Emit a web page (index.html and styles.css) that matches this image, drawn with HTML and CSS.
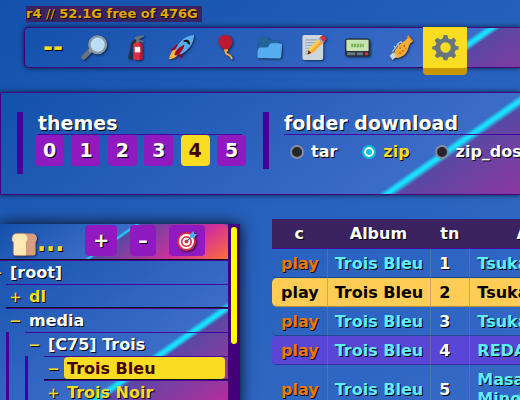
FILE: index.html
```html
<!DOCTYPE html>
<html lang="en">
<head>
<meta charset="utf-8">
<meta name="viewport" content="width=device-width, initial-scale=1">
<title>r4</title>
<link rel="stylesheet" href="styles.css">
</head>
<body>
<header class="top">
  <p class="status">r4 <span class="slashes">//</span> 52.1G free of 476G</p>
  <nav class="ops">
    <a class="op op-close" href="#">--</a>
    <a class="op" href="#search" aria-label="search">
      <svg viewBox="0 0 36 36"><path d="M4 32 15 21" stroke="#66757f" stroke-width="7" stroke-linecap="round"/><path d="m12 24 4-4" stroke="#8899a6" stroke-width="4"/><circle cx="24" cy="14" r="12" fill="#bbddf5" stroke="#8899a6" stroke-width="3.5"/></svg>
    </a>
    <a class="op" href="#unpost" aria-label="unpost">
      <svg viewBox="0 0 36 36"><path d="M18 7c-8 0-10 5-10 12L5 31c-1 4 3 5 5 3V20c0-6 2-9 8-10z" fill="#292f33"/><path d="M12 34V15c0-3 2-5 6-5s7 2 7 5v19c0 3-13 3-13 0z" fill="#dd2e44"/><path d="M21 11c3 1 4 2 4 5v18c0 1-2 2-4 2z" fill="#be1931"/><path d="M14 17h8v8h-8z" fill="#f5f8fa"/><path d="M16 6h5v5h-5zM15 3l12-3v2l-7 4 7 3-1 2-9-4-3-2z" fill="#66757f"/></svg>
    </a>
    <a class="op" href="#up" aria-label="upload">
      <svg viewBox="0 0 36 36"><path d="M7 18c4-6 9-6 12-5L10 24 2 20zM18 29c6-4 6-9 5-12L13 26l4 8z" fill="#a0041e"/><path d="M36 0C26 1 18 5 10 19l-1 5 5 4 5-1C31 19 36 10 36 0z" fill="#55acee"/><path d="M11 21c-5-1-9 3-11 14 9-1 14-5 13-11z" fill="#ffac33"/><path d="M10 25c-3 0-5 3-6 7 5-1 8-3 8-6z" fill="#ffcc4d"/><path d="M22 14C17 16 10 21 8 27c-1 2 1 3 3 2 6-2 11-10 11-15z" fill="#a0041e"/><path d="M21 8c5-3 10 0 9 6l-3-1c0-3-3-4-6-3z" fill="#111"/></svg>
    </a>
    <a class="op" href="#mkdir" aria-label="batch upload">
      <svg viewBox="0 0 36 36"><path d="M18 21c4 2-2 4 1 6s8 2 8 8" fill="none" stroke="#ffac33" stroke-width="2.5"/><path d="M28 10c0 6-5 10-9 12-7-3-11-7-11-13C8 3 12 0 18 0s10 4 10 10z" fill="#be1931"/><path d="m16 21 5-1 1 3-6 1z" fill="#ffac33"/></svg>
    </a>
    <a class="op" href="#folder" aria-label="new folder">
      <svg viewBox="0 0 36 36"><path d="M2 30V7c0-3 1-4 4-4h7c4 0 4 5 7 5h8c3 0 4 2 4 4v19z" fill="#226699"/><path d="M1 33c-1-6 0-14 3-15h10c4 0 3-6 7-6h11c3 0 4 1 4 3l-1 15c0 3-2 4-4 4z" fill="#55acee"/></svg>
    </a>
    <a class="op" href="#md" aria-label="new document">
      <svg viewBox="0 0 36 36"><rect x="2" width="30" height="36" rx="3" fill="#ccd6dd"/><path d="M6 7h18M6 11h18M6 15h16M6 19h12M6 23h7M6 27h5" stroke="#99aab5" stroke-width="1.5"/><path d="m9 28 2-8L28 3l6 6-17 17z" fill="#ffcc4d"/><path d="m14 23 17-17 3 3-17 17z" fill="#f4a83d"/><path d="m26 5 4-4c2-2 8 4 6 6l-4 4z" fill="#dd2e44"/><path d="m25 6 2-2 6 6-2 2z" fill="#99aab5"/><path d="m9 28 2-6 4 4z" fill="#662113"/></svg>
    </a>
    <a class="op" href="#msg" aria-label="message">
      <svg viewBox="0 0 36 36"><rect y="5" width="36" height="26" rx="4" fill="#292f33"/><rect x="2" y="7" width="32" height="16" rx="1" fill="#c6e5b3"/><path d="M9 15h18" stroke="#77b255" stroke-width="5" stroke-dasharray="3 1"/><path d="M3 25h12v4H3zm14 0h9v4h-9z" fill="#66757f"/><circle cx="31" cy="27" r="2.5" fill="#dd2e44"/></svg>
    </a>
    <a class="op" href="#player" aria-label="media player">
      <svg viewBox="0 0 36 36"><path d="m5 24 10-13 4-1M10 19l-3-3m8 0-3-4m7 1-2-4" fill="none" stroke="#99c5e8" stroke-width="2"/><path d="M8 31C5 25 11 17 19 11c5-4 8-5 8-10 2 3 4 6 7 8-3 3-5 4-6 9-1 6-6 12-12 14-4 2-7 1-8-1z" fill="#ffac33"/><path d="m1 30 5-5 5 6-6 5z" fill="#ccd6dd"/><path d="m27 1 7 8" stroke="#f4900c" stroke-width="2"/><path d="M15 19h2m4-3h2m-4 7h2m3-3h1m-10 6h2" stroke="#a65b10" stroke-width="2.5"/></svg>
    </a>
    <a class="op op-active" href="#cfg" aria-label="settings">
      <svg viewBox="0 0 36 36"><path d="m15.500 0h5l1.500 5 3.500 1.500 4.500-2.500 3.500 3.500-2.500 4.500 1.500 3.500 4.500 1v4l-4.500 1.500-1.500 3.500 2.500 4.500-3.500 3.500-4.500-2.500-3.500 1.500-1.500 4h-5l-1.500-4-3.500-1.500-4.500 2.500-3.500-3.500 2.500-4.500-1.500-3.500-4.500-1.500v-4l4.500-1 1.500-3.500-2.500-4.500 3.500-3.500 4.500 2.500 3.500-1.500zM18 10.500a7.500 7.500 0 1 0 0 15 7.500 7.500 0 0 0 0-15z" fill="#66757f" fill-rule="evenodd"/></svg>
    </a>
  </nav>
</header>

<section class="settings">
  <div class="setting">
    <h3>themes</h3>
    <div class="themes">
      <button class="key">0</button>
      <button class="key">1</button>
      <button class="key">2</button>
      <button class="key">3</button>
      <button class="key key-on">4</button>
      <button class="key">5</button>
    </div>
  </div>
  <div class="setting setting-wide">
    <h3>folder download</h3>
    <div class="formats">
      <label><input type="radio" name="fmt">tar</label>
      <label><input type="radio" name="fmt" checked><span>zip</span></label>
      <label><input type="radio" name="fmt">zip_dos</label>
    </div>
  </div>
</section>

<main class="browser">
  <aside class="tree">
    <div class="tree-body">
      <div class="tree-head">
        <a class="crumbs" href="#crumbs" aria-label="breadcrumbs">
          <svg viewBox="0 0 36 36"><path d="M10 2h18c5 0 8 3 8 7 0 3-1 4-2 6v15c0 3-1 4-4 4H10z" fill="#d99e82"/><path d="M7 2h9c4 0 7 3 7 7 0 3-1 4-2 5v17c0 2-1 3-3 3H6c-3 0-4-1-4-3V15C0 13 0 12 0 10c0-5 3-8 7-8z" fill="#ffe8b6" stroke="#c1866a" stroke-width="1"/></svg><span>...</span>
        </a>
        <button class="key">+</button>
        <button class="key">–</button>
        <button class="key" aria-label="locate">
          <svg viewBox="0 0 36 36"><circle cx="17" cy="19" r="17" fill="#dd2e44"/><circle cx="17" cy="19" r="13.5" fill="#fff"/><circle cx="17" cy="19" r="10" fill="#dd2e44"/><circle cx="17" cy="19" r="7" fill="#fff"/><circle cx="17" cy="19" r="3.5" fill="#dd2e44"/><path d="M17 19 30 6" stroke="#226699" stroke-width="2"/><path d="m23 12 1-7 6-5 1 5 5 1-5 6-7 1z" fill="#55acee"/></svg>
        </button>
      </div>
      <ul class="nodes nodes-root">
        <li>
          <div class="node"><a class="mark" href="#">−</a><a class="dir open" href="#">[root]</a></div>
          <ul class="nodes">
            <li class="last">
              <div class="node"><a class="mark" href="#">+</a><a class="dir" href="#">dl</a></div>
            </li>
            <li>
              <div class="node"><a class="mark" href="#">−</a><a class="dir open" href="#">media</a></div>
              <ul class="nodes">
                <li>
                  <div class="node"><a class="mark" href="#">−</a><a class="dir open" href="#">[C75] Trois</a></div>
                  <ul class="nodes">
                    <li class="last">
                      <div class="node"><a class="mark" href="#">−</a><a class="dir current" href="#">Trois Bleu</a></div>
                    </li>
                    <li class="last">
                      <div class="node"><a class="mark" href="#">+</a><a class="dir" href="#">Trois Noir</a></div>
                    </li>
                  </ul>
                </li>
              </ul>
            </li>
          </ul>
        </li>
      </ul>
    </div>
    <div class="scrollbar"><div class="thumb"></div></div>
  </aside>

  <table class="files">
    <thead>
      <tr><th>c</th><th>Album</th><th>tn</th><th class="artist">Artist</th></tr>
    </thead>
    <tbody>
      <tr><td><a href="#1">play</a></td><td>Trois Bleu</td><td class="num">1</td><td>Tsukasa</td></tr>
      <tr class="playing"><td><a href="#2">play</a></td><td>Trois Bleu</td><td class="num">2</td><td>Tsukasa</td></tr>
      <tr><td><a href="#3">play</a></td><td>Trois Bleu</td><td class="num">3</td><td>Tsukasa</td></tr>
      <tr class="selected"><td><a href="#4">play</a></td><td>Trois Bleu</td><td class="num">4</td><td>REDALiCE</td></tr>
      <tr><td><a href="#5">play</a></td><td>Trois Bleu</td><td class="num">5</td><td class="wrap">Masayoshi Minoshima</td></tr>
    </tbody>
  </table>
</main>
</body>
</html>
```
FILE: styles.css
```css
* { box-sizing: border-box; }

body {
  margin: 0;
  min-height: 100vh;
  display: flex;
  flex-direction: column;
  overflow: hidden;
  color: #fff;
  font: bold 16px/19px "DejaVu Sans", sans-serif;
  text-shadow: 1px 1px 0 #000;
  background: linear-gradient(145deg, #1351ac 0, #2862be 350px, #3569c6 619px, #19e0ff 624px, #19e0ff 627px, #5a48a4 633px, #b02c9c 900px) no-repeat;
}

a { color: inherit; text-decoration: none; }
svg { display: block; width: 25px; height: 25px; overflow: visible; fill: none; filter: drop-shadow(1px 1px 1px rgba(0, 0, 0, .6)); }
button { font: inherit; color: inherit; text-shadow: inherit; border: 0; }

.top { padding: 6px 0 0 24px; }

.status {
  width: fit-content;
  margin: 0 0 5px 2px;
  padding-right: 4px;
  font-size: 13px;
  line-height: 16px;
  color: #e6a600;
  background: #3a2360;
}
.slashes { font-weight: normal; }

.ops {
  display: flex;
  height: 41px;
  padding-left: 10px;
  border: 1px solid #430079;
  border-right: 0;
  border-radius: 5px 0 0 5px;
  box-shadow: 0 0 5px rgba(0, 0, 0, .7);
  background: linear-gradient(145deg, #1351ac 0, #3b6cc8 263px, #19e0ff 267px, #19e0ff 269px, #5a48a4 273px, #8738a2 325px, #e02a90 500px);
}
.op {
  flex: none;
  width: 44px;
  height: 39px;
  display: flex;
  align-items: center;
  justify-content: center;
}
.op-close { width: 36px; font-size: 24px; color: #fadc22; }
.op-active {
  height: 48px;
  margin-top: -1px;
  border-bottom: 7px solid #c99700;
  border-radius: 0 0 4px 4px;
  background: #fadc22;
}
.op-active svg { filter: none; }

.settings {
  display: flex;
  gap: 17px;
  margin-top: 24px;
  padding: 19px 0 20px 16px;
  border: 1px solid #430079;
  border-right: 0;
  box-shadow: 0 0 5px rgba(0, 0, 0, .7);
  background: linear-gradient(145deg, #1351ac 0, #3b6cc8 299px, #19e0ff 303px, #19e0ff 305px, #5a48a4 310px, #9434a0 390px, #e02a90 560px);
}
.setting {
  flex: none;
  align-self: flex-start;
  padding: 0 4px 8px 15px;
  border-left: 6px solid #440099;
}
.setting-wide { flex: 1 0 auto; padding-bottom: 0; }
.setting h3 {
  margin: 0;
  border-bottom: 1px solid #440099;
  font-size: 19px;
  line-height: 22px;
}
.themes {
  display: flex;
  justify-content: space-between;
  width: 211px;
  margin: 0 -4px 0 -3px;
}
.key {
  height: 31px;
  padding: 0 8px;
  border-radius: 4px;
  font-size: 19px;
  background: #9019bf;
}
.themes .key { width: 29px; }
.key-on { color: #400; text-shadow: none; background: #fadc22; }
.key svg { width: 20px; height: 20px; }

.formats { display: flex; gap: 25px; padding: 7px 6px 8px; }
.formats label { display: flex; align-items: center; gap: 7px; }
.formats input {
  appearance: none;
  width: 14px;
  height: 14px;
  margin: 0;
  border: 2px solid #8a8a9c;
  border-radius: 50%;
  background: #25252d;
}
.formats input:checked { border: 2px solid #0bbedc; background: #0bbedc; box-shadow: inset 0 0 0 2px #fff; }
.formats input:checked + span { color: #fadc22; }

.browser {
  flex: 1;
  display: grid;
  grid-template-columns: 240px 1fr;
  gap: 32px;
  padding-top: 24px;
}

.tree {
  display: flex;
  margin-top: 5px;
  box-shadow: 0 0 14px rgba(0, 0, 0, .9);
  background: #430079;
}
.tree-body {
  flex: 1;
  overflow: hidden;
  background: linear-gradient(145deg, #1351ac 0, #3b6cc8 194px, #19e0ff 198px, #19e0ff 200px, #5a48a4 204px, #c02a9c 285px);
}
.tree-head {
  display: flex;
  align-items: flex-start;
  height: 36px;
  padding: 1px 0 0 12px;
  border-bottom: 1px solid #111;
  border-radius: 0 5px 0 0;
  background: linear-gradient(145deg, #1351ac 0, #3b6cc8 77px, #19e0ff 79px, #5a48a4 81px, #d0309a 125px, #ff6a3c 158px);
}
.tree-head .key + .key { margin-left: 13px; }
.crumbs { display: flex; margin-right: 21px; padding-top: 7px; font-size: 24px; line-height: 22px; color: #fadc22; }

.nodes { margin: 0; padding: 0 0 0 16px; border-left: 3px solid #440099; list-style: none; }
.nodes-root { margin-left: -13px; padding: 0; border: 0; }
.nodes-root > li > .nodes { border-color: transparent; }
.nodes li { border-top: 1px solid #440099; }
.node { display: flex; height: 23px; padding-right: 3px; line-height: 23px; }
.last > .node { border-bottom: 1px solid #111; }
.mark { flex: none; width: 20px; padding-left: 4px; font-family: "DejaVu Sans Mono", monospace; font-size: 18px; font-weight: normal; color: #fadc22; }
.dir { flex: 1; padding-left: 3px; color: #fadc22; white-space: nowrap; }
.open { color: #fff; }
.current { color: #400; text-shadow: none; border-radius: 4px; background: #fadc22; }

.scrollbar { width: 12px; padding: 3px; }
.thumb { width: 6px; height: 117px; border-radius: 3px; background: #ff0; }

.files { align-self: start; border-collapse: separate; border-spacing: 0; white-space: nowrap; }
.files th { height: 30px; padding: 0 8px; border-bottom: 1px solid #440099; background: #3a2360; }
.files .artist { min-width: 145px; }
.files td {
  padding: 5px 7px 4px;
  border-bottom: 1px solid rgba(0, 0, 40, .3);
  border-left: 1px solid rgba(128, 128, 128, .45);
  color: #5ef0ff;
}
.files td:first-child { padding: 5px 8px 4px 9px; border-left: 0; border-radius: 5px 0 0 5px; color: #f07800; }
.files td.num { padding: 5px 19px 4px 8px; color: #fff; }
.files .wrap { white-space: normal; }
.files .playing td { color: #000; text-shadow: none; background: #ffcc55; }
.files .selected td { background: #5a46d6; }
```
